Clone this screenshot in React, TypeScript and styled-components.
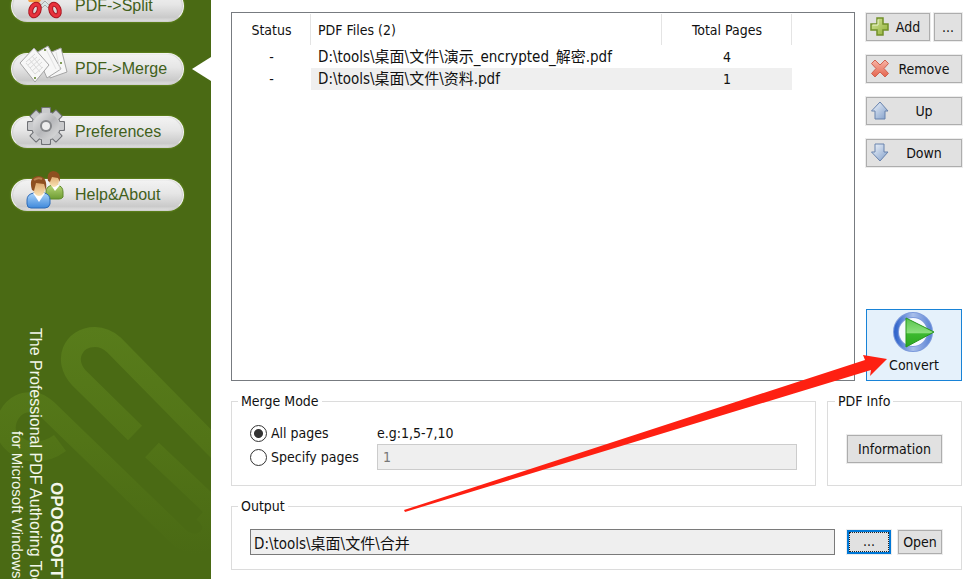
import React, { useState } from "react";
import styled, { createGlobalStyle, css } from "styled-components";

const GlobalStyle = createGlobalStyle`
  * { box-sizing: border-box; }
  body { margin: 0; background: #fff; }
  body, button, input {
    font-family: "DejaVu Sans Condensed", "Noto Sans", "Noto Sans CJK SC", sans-serif;
    font-size: 14px;
    line-height: 16px;
    color: #111;
  }
`;

const Page = styled.div`
  display: grid;
  grid-template-columns: 211px minmax(0, 1fr);
  height: 100vh;
  min-height: 500px;
  overflow: hidden;
`;

/* ---------- sidebar ---------- */

const Sidebar = styled.aside`
  position: relative;
  overflow: hidden;
  background: #4a6a14;
`;

const Watermark = styled.svg`
  position: absolute;
  left: 0;
  top: 320px;
`;

const Nav = styled.nav`
  position: relative;
  display: flex;
  flex-direction: column;
  gap: 31px;
  margin-top: -10px;
  padding-left: 11px;
`;

const NavRow = styled.div<{ $current?: boolean }>`
  display: flex;
  align-items: center;
  justify-content: space-between;
  ${(p) =>
    p.$current &&
    css`
      &::after {
        content: "";
        border: solid transparent;
        border-width: 12px 19px 12px 0;
        border-right-color: #fff;
      }
    `}
`;

const NavButton = styled.button`
  position: relative;
  width: 173px;
  height: 32px;
  padding: 0 0 0 63px;
  border: 1px solid #f4f4f2;
  border-bottom-color: #d0d0ce;
  border-radius: 16px;
  background: linear-gradient(#f3f3f3, #e6e6e6 45%, #cacaca 88%, #dedede);
  box-shadow: 0 0 2px #86b033, inset 1px 0 1px #cfcfcf, inset -1px 0 1px #cfcfcf;
  color: #41601a;
  font-family: "Liberation Sans", Arial, sans-serif;
  font-size: 16px;
  text-align: left;
  white-space: nowrap;
`;

const NavIcon = styled.svg`
  position: absolute;
  left: 5px;
  bottom: 1px;
  overflow: visible;
`;

const Brand = styled.div`
  position: absolute;
  top: 328px;
  left: 8px;
  writing-mode: vertical-rl;
  color: #f3f7ea;
  font-family: "Liberation Sans", Arial, sans-serif;
  font-size: 16px;
  line-height: 18px;
  white-space: nowrap;
`;

const BrandName = styled.strong`
  display: block;
  padding-top: 154px;
  font-size: 17px;
  line-height: 24px;
`;

const BrandLine = styled.span<{ $small?: boolean }>`
  display: block;
  ${(p) =>
    p.$small &&
    css`
      padding-top: 103px;
      font-size: 15px;
    `}
`;

/* ---------- main area ---------- */

const Main = styled.main`
  position: relative;
  display: flex;
  flex-direction: column;
  gap: 12px;
  padding: 12px 15px 9px 20px;
`;

const Row = styled.div<{ $grow?: boolean }>`
  display: flex;
  gap: 11px;
  flex: ${(p) => (p.$grow ? "1 1 0" : "0 0 auto")};
  min-height: 0;
`;

const FileList = styled.div`
  flex: 1;
  border: 1px solid #777b80;
  overflow: hidden;
`;

const Table = styled.table`
  table-layout: fixed;
  width: 560px;
  border-collapse: collapse;
`;

const Col = styled.col<{ $width: number }>`
  width: ${(p) => p.$width}px;
`;

const Head = styled.th<{ $left?: boolean }>`
  height: 33px;
  padding: 0 0 0 ${(p) => (p.$left ? 7 : 0)}px;
  background: linear-gradient(#e4e4e4, #e4e4e4) right 1px / 1px 31px no-repeat;
  font-weight: 400;
  text-align: ${(p) => (p.$left ? "left" : "center")};
`;

const Cell = styled.td<{ $left?: boolean; $selected?: boolean }>`
  height: 22px;
  padding: 0 0 0 ${(p) => (p.$left ? 7 : 0)}px;
  background: ${(p) => (p.$selected ? "#efefef" : "none")};
  font-size: ${(p) => (p.$left ? 15 : 14)}px;
  text-align: ${(p) => (p.$left ? "left" : "center")};
  white-space: nowrap;
`;

const Actions = styled.div`
  display: flex;
  flex-direction: column;
  gap: 14px;
  width: 96px;
  padding-top: 1px;
`;

const ButtonPair = styled.div`
  display: flex;
  gap: 4px;
`;

const Button = styled.button<{ $width?: number; $short?: boolean }>`
  display: flex;
  align-items: center;
  width: ${(p) => (p.$width ? `${p.$width}px` : "100%")};
  height: ${(p) => (p.$short ? 24 : 28)}px;
  padding: 0 3px;
  border: 1px solid #adadad;
  outline: 1px solid #ececec;
  background: #e1e1e1;
`;

const FocusedButton = styled(Button)`
  border: 2px solid #0078d7;
  padding: 0;

  & > span {
    align-self: stretch;
    border: 1px dotted #222;
  }
`;

const ButtonText = styled.span`
  flex: 1;
  text-align: center;
  white-space: nowrap;
`;

const ConvertButton = styled.button`
  display: flex;
  flex-direction: column;
  align-items: center;
  gap: 4px;
  height: 72px;
  margin-top: auto;
  padding: 1px 0 0;
  border: 1px solid #1883d7;
  background: #e5f1fb;
`;

const Group = styled.fieldset<{ $width?: number; $pad: string }>`
  flex: ${(p) => (p.$width ? `0 0 ${p.$width}px` : "1")};
  min-width: 0;
  margin: 0;
  padding: ${(p) => p.$pad};
  border: 1px solid #dcdcdc;
`;

const OutputGroup = styled(Group)`
  flex: none;
`;

const Legend = styled.legend`
  margin-left: -12px;
  padding: 0 3px;
`;

const ModeGrid = styled.div`
  display: grid;
  grid-template-columns: 127px 1fr;
  grid-template-rows: 22px 26px;
  align-items: center;
`;

const RadioLabel = styled.label`
  display: flex;
  align-items: center;
  gap: 4px;
  white-space: nowrap;
`;

const Radio = styled.input`
  appearance: none;
  width: 17px;
  height: 17px;
  margin: 0;
  border: 1px solid #333;
  border-radius: 50%;
  background: #fff;

  &:checked {
    background: radial-gradient(circle, #333 4px, #fff 5px);
  }
`;

const TextBox = styled.input<{ $strong?: boolean }>`
  flex: 1;
  width: 100%;
  min-width: 0;
  height: 26px;
  padding: 0 ${(p) => (p.$strong ? 3 : 5)}px;
  border: 1px solid ${(p) => (p.$strong ? "#7a7a7a" : "#cccccc")};
  background: #efefef;
  font-size: ${(p) => (p.$strong ? 15 : 14)}px;

  &:disabled { color: #777; }
`;

const OutputRow = styled.div`
  display: flex;
  align-items: center;
  gap: 7px;

  & > input { margin-right: 5px; }
`;

const Pointer = styled.svg`
  position: absolute;
  right: 88px;
  bottom: 66px;
  pointer-events: none;
`;

/* ---------- drawings ---------- */

const ScissorsIcon = () => (
  <NavIcon width="50" height="44" viewBox="0 0 50 44">
    <path d="M9 20h14l2 7-13-1z" fill="#f5a045" />
    <path d="M24 28 38 4M34 28 20 4" stroke="#ddd" strokeWidth="4" />
    <path d="M23 30l5-5 5 5-2 2-3-3-3 3z" fill="#d8e5e5" stroke="#aaa" />
    <g fill="none" stroke="#a81822" strokeWidth="5">
      <ellipse cx="18" cy="34" rx="4" ry="6" transform="rotate(22 18 34)" />
      <ellipse cx="38" cy="34" rx="4" ry="6" transform="rotate(-22 38 34)" />
    </g>
    <g fill="none" stroke="#e8323c" strokeWidth="3">
      <ellipse cx="18" cy="34" rx="4" ry="6" transform="rotate(22 18 34)" />
      <ellipse cx="38" cy="34" rx="4" ry="6" transform="rotate(-22 38 34)" />
    </g>
  </NavIcon>
);

const PagesIcon = () => (
  <NavIcon width="50" height="38" viewBox="0 0 50 38">
    <g stroke="#a5a5a5" strokeWidth="1" fill="#f7f7f7" strokeLinejoin="round">
      <path d="M30 9 44 3 50 27 33 33Z" />
      <path d="M19 8 31 1 44 24 30 33Z" />
      <path d="M3 18 17 3 32 20 18 37Z" />
    </g>
    <path d="M9 17l9-8M11 20l9-8M13 23l10-9M15 26l10-9M18 29l8-7M9 18l9 11M12 14l11 13M15 11l10 12" stroke="#dadada" />
    <path d="M29 4l10 20M39 7l4 18" stroke="#e2e2e2" />
    <g fill="#5a7d22">
      <circle cx="28" cy="5" r="1" />
      <circle cx="44" cy="18" r="1" />
      <circle cx="18" cy="33" r="1" />
    </g>
  </NavIcon>
);

const teeth = [0, 45, 90, 135];

const GearIcon = () => (
  <NavIcon width="50" height="40" viewBox="0 0 50 40">
    <defs>
      <linearGradient id="gear" gradientUnits="userSpaceOnUse" x1="14" y1="6" x2="44" y2="36">
        <stop offset="0" stopColor="#f0f0f0" />
        <stop offset="0.5" stopColor="#b6b7ba" />
        <stop offset="1" stopColor="#e8e8e8" />
      </linearGradient>
    </defs>
    <g fill="#6f7175">
      <circle cx="29" cy="20" r="15" />
      {teeth.map((a) => (
        <rect key={a} x="24" y="1" width="10" height="38" rx="1" transform={`rotate(${a} 29 20)`} />
      ))}
    </g>
    <circle cx="29" cy="20" r="14" fill="#c9cacc" />
    <g fill="#c9cacc">
      {teeth.map((a) => (
        <rect key={a} x="25" y="2" width="8" height="36" rx="1" transform={`rotate(${a} 29 20)`} />
      ))}
    </g>
    <circle cx="29" cy="20" r="13" fill="url(#gear)" />
    <circle cx="29" cy="20" r="6" fill="#85878a" />
    <circle cx="29" cy="20" r="4" fill="#eee" />
  </NavIcon>
);

const PeopleIcon = () => (
  <NavIcon width="50" height="40" viewBox="0 0 50 40">
    <defs>
      <linearGradient id="blue" x1="0" y1="0" x2="0" y2="1">
        <stop offset="0" stopColor="#a9d3fa" />
        <stop offset="1" stopColor="#3f89db" />
      </linearGradient>
      <linearGradient id="green" x1="0" y1="0" x2="0" y2="1">
        <stop offset="0" stopColor="#b8d677" />
        <stop offset="1" stopColor="#6d9c32" />
      </linearGradient>
      <linearGradient id="skin" x1="0" y1="0" x2="0" y2="1">
        <stop offset="0" stopColor="#d59a5c" />
        <stop offset="1" stopColor="#fbe3b5" />
      </linearGradient>
    </defs>
    <path d="M29 29V23q0-6 7-7h4q6 1 6 7v5q-1 2-4 2H30z" fill="url(#green)" stroke="#5e8a2b" />
    <path d="M34 16l4 6 5-6z" fill="#fff" />
    <ellipse cx="37" cy="11" rx="5" ry="7" fill="url(#skin)" />
    <path d="M31 12q-2-9 5-10 8 0 7 11l-2-4-6-1-2 5z" fill="#8e4f20" />
    <path d="M10 35V31q0-6 7-7h10q6 1 6 7v4q-1 4-5 4H14q-4 0-4-4z" fill="url(#blue)" stroke="#2f6cb8" />
    <path d="M16 24l6 9 6-9z" fill="#fff" />
    <ellipse cx="22" cy="19" rx="6" ry="8" fill="url(#skin)" />
    <path d="M15 21Q11 8 21 7q10 0 8 15l-2-7-8-1-2 8z" fill="#8e4f20" />
    <path d="M17 11q4-3 8-1" stroke="#bd8250" fill="none" strokeWidth="2" />
  </NavIcon>
);

const AddIcon = () => (
  <svg width="20" height="20" viewBox="0 0 20 20">
    <defs>
      <linearGradient id="plus" x1="0" y1="0" x2="1" y2="1">
        <stop offset="0" stopColor="#d7e8a0" />
        <stop offset="1" stopColor="#8fae35" />
      </linearGradient>
    </defs>
    <path d="M7 1h6v6h5v6h-5v5H7v-5H1V7h6z" fill="url(#plus)" stroke="#71902a" strokeWidth="1.5" />
    <path d="M8 2.500v5.500H2.500" fill="none" stroke="#eef5cf" />
  </svg>
);

const RemoveIcon = () => (
  <svg width="20" height="20" viewBox="0 0 20 20">
    <defs>
      <linearGradient id="cross" x1="0" y1="0" x2="0" y2="1">
        <stop offset="0" stopColor="#f7b4a5" />
        <stop offset="1" stopColor="#e4654f" />
      </linearGradient>
    </defs>
    <path
      d="M5 1 10 6l5-5 3.500 3.500L14 9.500l4.500 5L15 18l-5-5-5 5-3.500-3.500 4.500-5-4.500-5z"
      fill="url(#cross)"
      stroke="#cf6250"
      strokeLinejoin="round"
    />
  </svg>
);

const ArrowIcon = ({ down }: { down?: boolean }) => (
  <svg width="20" height="20" viewBox="0 0 20 20">
    <defs>
      <linearGradient id={down ? "arrowDown" : "arrowUp"} x1="0" y1="0" x2="1" y2="1">
        <stop offset="0" stopColor="#f3f7fc" />
        <stop offset="1" stopColor="#7f9dc9" />
      </linearGradient>
    </defs>
    <path
      d={down ? "M5 1h9v8h4L10 18 1.500 9H5z" : "M10 1 18 10h-3v8H5v-8H1.500z"}
      fill={`url(#${down ? "arrowDown" : "arrowUp"})`}
      stroke="#6883ad"
      strokeLinejoin="round"
    />
  </svg>
);

const PlayIcon = () => (
  <svg width="44" height="42" viewBox="0 0 44 42">
    <defs>
      <linearGradient id="play" x1="0" y1="0" x2="0" y2="1">
        <stop offset="0" stopColor="#57c44c" />
        <stop offset="0.500" stopColor="#8be07c" />
        <stop offset="0.550" stopColor="#3cb92f" />
        <stop offset="1" stopColor="#2da81f" />
      </linearGradient>
      <linearGradient id="ring" x1="0" y1="0" x2="1" y2="0">
        <stop offset="0" stopColor="#3467cc" />
        <stop offset="0.500" stopColor="#a9bfea" />
        <stop offset="1" stopColor="#5f86d6" />
      </linearGradient>
    </defs>
    <circle cx="21" cy="21" r="17" fill="#f6faff" stroke="#7d9bdc" strokeWidth="6" />
    <circle cx="21" cy="21" r="17" fill="none" stroke="url(#ring)" strokeWidth="4" />
    <path d="M14 7 42 21 14 36z" fill="url(#play)" stroke="#27961d" />
  </svg>
);

const navItems = [
  { label: "PDF->Split", Icon: ScissorsIcon },
  { label: "PDF->Merge", Icon: PagesIcon, current: true },
  { label: "Preferences", Icon: GearIcon },
  { label: "Help&About", Icon: PeopleIcon },
];

const files = [
  { path: "D:\\tools\\桌面\\文件\\演示_encrypted_解密.pdf", pages: 4 },
  { path: "D:\\tools\\桌面\\文件\\资料.pdf", pages: 1, selected: true },
];

export default function App() {
  const [mode, setMode] = useState("all");

  return (
    <Page>
      <GlobalStyle />
      <Sidebar>
        <Watermark width="211" height="259" viewBox="0 320 211 259" aria-hidden="true">
          <defs>
            <linearGradient id="clip" gradientUnits="userSpaceOnUse" x1="0" y1="325" x2="0" y2="555">
              <stop offset="0" stopColor="#587c1b" />
              <stop offset="0.500" stopColor="#527417" />
              <stop offset="1" stopColor="#4a6a14" />
            </linearGradient>
          </defs>
          <g fill="none" stroke="url(#clip)" strokeWidth="20">
            <path d="M135 433 79 378C63 361 72 337 95 337Q105 337 114 345L225 458" />
            <path d="M152 450 205 500 230 525" />
            <path d="M60 443Q44 455 24 450Q-1 438 8 417Q17 399 37 403Q43 405 51 413L180 538Q196 550 209 537Q218 525 203 512" />
          </g>
        </Watermark>
        <Nav>
          {navItems.map(({ label, Icon, current }) => (
            <NavRow key={label} $current={current}>
              <NavButton type="button" aria-current={current ? "page" : undefined}>
                <Icon />
                {label}
              </NavButton>
            </NavRow>
          ))}
        </Nav>
        <Brand>
          <BrandName>OPOOSOFT</BrandName>
          <BrandLine>The Professional PDF Authoring Tools</BrandLine>
          <BrandLine $small>for Microsoft Windows</BrandLine>
        </Brand>
      </Sidebar>

      <Main>
        <Row $grow>
          <FileList>
            <Table>
              <colgroup>
                <Col $width={79} />
                <Col $width={351} />
                <Col $width={130} />
              </colgroup>
              <thead>
                <tr>
                  <Head>Status</Head>
                  <Head $left>PDF Files (2)</Head>
                  <Head>Total Pages</Head>
                </tr>
              </thead>
              <tbody>
                {files.map((f) => (
                  <tr key={f.path}>
                    <Cell>-</Cell>
                    <Cell $left $selected={f.selected}>{f.path}</Cell>
                    <Cell $selected={f.selected}>{f.pages}</Cell>
                  </tr>
                ))}
              </tbody>
            </Table>
          </FileList>
          <Actions>
            <ButtonPair>
              <Button type="button" $width={64}><AddIcon /><ButtonText>Add</ButtonText></Button>
              <Button type="button" $width={28} aria-label="Add more"><ButtonText>...</ButtonText></Button>
            </ButtonPair>
            <Button type="button"><RemoveIcon /><ButtonText>Remove</ButtonText></Button>
            <Button type="button"><ArrowIcon /><ButtonText>Up</ButtonText></Button>
            <Button type="button"><ArrowIcon down /><ButtonText>Down</ButtonText></Button>
            <ConvertButton type="button"><PlayIcon />Convert</ConvertButton>
          </Actions>
        </Row>

        <Row>
          <Group $pad="13px 18px 15px 18px">
            <Legend>Merge Mode</Legend>
            <ModeGrid>
              <RadioLabel>
                <Radio type="radio" name="mode" checked={mode === "all"} onChange={() => setMode("all")} />
                All pages
              </RadioLabel>
              <span>e.g:1,5-7,10</span>
              <RadioLabel>
                <Radio type="radio" name="mode" checked={mode === "some"} onChange={() => setMode("some")} />
                Specify pages
              </RadioLabel>
              <TextBox aria-label="Page range" defaultValue="1" disabled={mode === "all"} />
            </ModeGrid>
          </Group>
          <Group $width={135} $pad="26px 19px 15px 19px">
            <Legend>PDF Info</Legend>
            <Button type="button"><ButtonText>Information</ButtonText></Button>
          </Group>
        </Row>

        <OutputGroup $pad="15px 19px 14px 18px">
          <Legend>Output</Legend>
          <OutputRow>
            <TextBox $strong aria-label="Output folder" readOnly value={"D:\\tools\\桌面\\文件\\合并"} />
            <FocusedButton type="button" $width={44} $short aria-label="Browse"><ButtonText>...</ButtonText></FocusedButton>
            <Button type="button" $width={44} $short><ButtonText>Open</ButtonText></Button>
          </OutputRow>
        </OutputGroup>

        <Pointer width="486" height="158" viewBox="403 355 486 158" aria-hidden="true">
          <path d="M404 510 865 360 863 355 887 359 870 376 871 370 405 512z" fill="#fe2012" />
        </Pointer>
      </Main>
    </Page>
  );
}
